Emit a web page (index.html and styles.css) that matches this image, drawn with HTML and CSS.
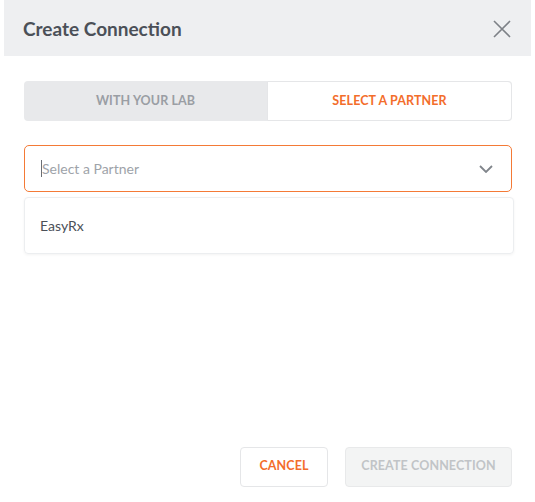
FILE: index.html
```html
<!DOCTYPE html>
<html>
<head>
<meta charset="utf-8">
<link rel="stylesheet" href="styles.css">
</head>
<body>
<div class="modal">
  <div class="header">
    <h1 class="title">Create Connection</h1>
    <button class="close" aria-label="Close">
      <svg width="18" height="18" viewBox="0 0 18 18"><path d="M1 1L17 17M17 1L1 17" stroke="#7d8187" stroke-width="1.6" fill="none"/></svg>
    </button>
  </div>
  <div class="body">
    <div class="tabs">
      <div class="tab">WITH YOUR LAB</div>
      <div class="tab active">SELECT A PARTNER</div>
    </div>
    <div class="select">
      <span class="caret"></span>
      <span class="placeholder">Select a Partner</span>
      <svg class="chev" width="14" height="8" viewBox="0 0 14 8"><path d="M1 1L7 7L13 1" stroke="#80858b" stroke-width="1.8" fill="none"/></svg>
    </div>
    <div class="menu">
      <div class="option">EasyRx</div>
    </div>
  </div>
  <div class="footer">
    <button class="btn cancel">CANCEL</button>
    <button class="btn create">CREATE CONNECTION</button>
  </div>
</div>
</body>
</html>
```
FILE: styles.css
```css
* { box-sizing: border-box; }
html, body { margin: 0; padding: 0; background: #fff; }
body { font-family: Lato, "Liberation Sans", sans-serif; width: 535px; height: 502px; }
.modal { width: 535px; height: 502px; display: flex; flex-direction: column; }
.header {
  margin: 0 4px 0 4px;
  height: 56px;
  background: #eeeff1;
  display: flex;
  align-items: center;
  justify-content: space-between;
  padding: 0 20px 0 19px;
}
.title { margin: 0; font-size: 19px; font-weight: 700; color: #4b5058; letter-spacing: 0; }
.close { background: none; border: 0; padding: 0; width: 18px; height: 18px; display: flex; margin-top: 2px; }
.body { padding: 25px 23px 0 24px; flex: 1; }
.tabs {
  display: flex;
  height: 40px;
  border-radius: 4px;
  background: #e8e9eb;
  width: 488px;
}
.tab {
  flex: 1;
  display: flex;
  align-items: center;
  justify-content: center;
  font-size: 12.5px;
  font-weight: 700;
  color: #9a9ea4;
  letter-spacing: 0.1px;
  padding-bottom: 1px;
}
.tab.active {
  background: #fff;
  color: #f36d2b;
  border: 1px solid #e5e6e8;
  border-radius: 0 4px 4px 0;
}
.select {
  margin-top: 24px;
  width: 488px;
  height: 47px;
  border: 1px solid #f47a36;
  border-radius: 5px;
  display: flex;
  align-items: center;
  padding: 0 18px 0 16px;
}
.caret { width: 1px; height: 17px; background: #6b6f75; margin-right: 0; }
.placeholder { flex: 1; font-size: 14px; color: #9ea3a9; }
.chev { display: block; }
.menu {
  margin-top: 5px;
  width: 490px;
  height: 57px;
  border: 1px solid #eceef0;
  border-radius: 4px;
  box-shadow: 0 1px 3px rgba(0,0,0,0.05);
  display: flex;
  align-items: center;
  padding-left: 15px;
}
.option { font-size: 14px; color: #4b5058; }
.footer {
  display: flex;
  justify-content: flex-end;
  gap: 17px;
  padding: 0 23px 15px 0;
}
.btn {
  height: 40px;
  border-radius: 4px;
  font-family: inherit;
  font-size: 12.5px;
  font-weight: 700;
  letter-spacing: 0.1px;
  padding: 0 0 3px 0;
}
.cancel { width: 88px; background: #fff; border: 1px solid #e5e6e8; color: #f36d2b; }
.create { width: 167px; background: #f3f4f4; border: 1px solid #e8e9ea; color: #c1c4c7; }
```
